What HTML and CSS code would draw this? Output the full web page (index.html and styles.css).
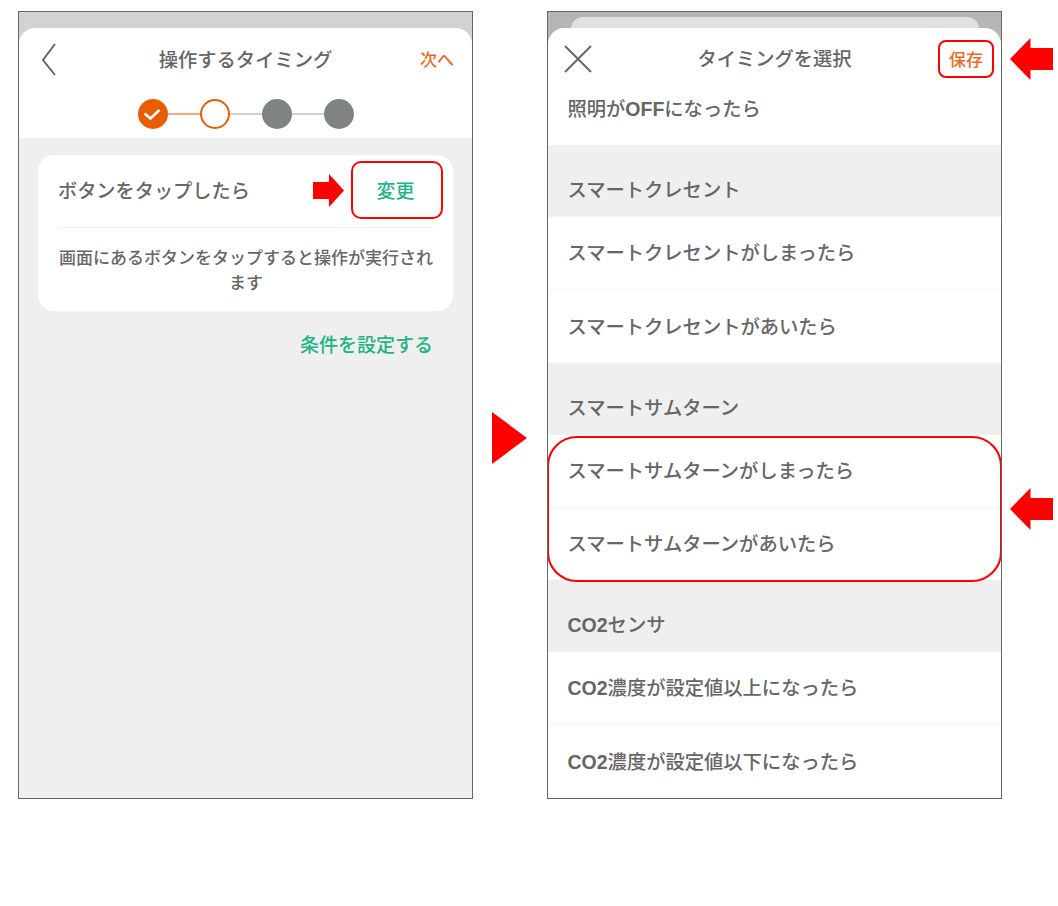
FILE: index.html
```html
<!DOCTYPE html>
<html lang="ja">
<head>
<meta charset="utf-8">
<title>タイミング設定</title>
<link rel="stylesheet" href="styles.css">
</head>
<body>
<main class="canvas">
  <section class="phone phone-light">
    <div class="sheet">
      <header class="nav">
        <svg class="nav-icon" width="30" height="36" viewBox="0 0 30 36"><path d="M15 2 L3 18 L15 33" fill="none" stroke="#666" stroke-width="2"/></svg>
        <h1 class="nav-title">操作するタイミング</h1>
        <span class="nav-action nav-next">次へ</span>
      </header>
      <div class="stepper">
        <span class="step step-done"><svg width="20" height="16" viewBox="0 0 20 16"><path d="M1.500 7.500 L7.500 12.500 L16.500 4" fill="none" stroke="#fff" stroke-width="2.600"/></svg></span>
        <span class="link link-on"></span>
        <span class="step step-now"></span>
        <span class="link"></span>
        <span class="step step-todo"></span>
        <span class="link"></span>
        <span class="step step-todo"></span>
      </div>
      <div class="body">
        <div class="card">
          <div class="card-head">
            <span class="card-title">ボタンをタップしたら</span>
            <svg class="mark-right" width="31" height="33" viewBox="0 0 31 33"><path d="M0 8 H16 V0 L31 16.500 L16 33 V25 H0 Z" fill="#f00"/></svg>
            <span class="change">変更</span>
          </div>
          <p class="card-text">画面にあるボタンをタップすると操作が実行されます</p>
        </div>
        <p class="cond">条件を設定する</p>
      </div>
    </div>
  </section>

  <section class="phone phone-dark">
    <div class="under"></div>
    <div class="sheet sheet-over">
      <header class="nav nav-select">
        <svg class="nav-icon" width="30" height="30" viewBox="0 0 30 30"><path d="M2 2 L28 28 M28 2 L2 28" fill="none" stroke="#666" stroke-width="2"/></svg>
        <h1 class="nav-title">タイミングを選択</h1>
        <span class="nav-action save">保存</span>
      </header>
      <div class="row row-first"><span>照明が<b class="latin">OFF</b>になったら</span></div>
      <div class="group">スマートクレセント</div>
      <div class="row row-line">スマートクレセントがしまったら</div>
      <div class="row">スマートクレセントがあいたら</div>
      <div class="group">スマートサムターン</div>
      <div class="pick">
        <div class="row row-line">スマートサムターンがしまったら</div>
        <div class="row row-short">スマートサムターンがあいたら</div>
      </div>
      <div class="group"><span><b class="latin">CO2</b>センサ</span></div>
      <div class="row row-line"><span><b class="latin">CO2</b>濃度が設定値以上になったら</span></div>
      <div class="row"><span><b class="latin">CO2</b>濃度が設定値以下になったら</span></div>
    </div>
  </section>

  <svg class="mark mark-next" width="35" height="52" viewBox="0 0 35 52"><path d="M0 0 L35 26 L0 52 Z" fill="#f00"/></svg>
  <svg class="mark mark-save" width="43" height="42" viewBox="0 0 43 42"><path d="M0 21 L20.500 0 V10 H43 V32 H20.500 V42 Z" fill="#f00"/></svg>
  <svg class="mark mark-pick" width="43" height="42" viewBox="0 0 43 42"><path d="M0 21 L20.500 0 V10 H43 V32 H20.500 V42 Z" fill="#f00"/></svg>
</main>
</body>
</html>
```
FILE: styles.css
```css
* { box-sizing: border-box; }
html, body { margin: 0; background: #fff; }
body { font-family: "Noto Sans CJK JP", "Noto Sans", sans-serif; color: #666; font-weight: 500; }
.canvas { position: relative; width: 1058px; height: 906px; display: flex; gap: 74px; padding: 11px 0 0 18px; overflow: hidden; }
.phone { position: relative; width: 455px; height: 788px; border: 1px solid #666; overflow: hidden; padding-top: 16px; }
.phone-light { background: #d2d2d2; }
.phone-dark { background: #b5b5b5; overflow: visible; }
.under { position: absolute; left: 23px; right: 22px; top: 5px; height: 30px; background: #e0e0e0; border-radius: 12px 12px 0 0; }
.sheet { position: relative; height: 100%; background: #fff; border-radius: 16px 16px 0 0; display: flex; flex-direction: column; overflow: hidden; }
.nav { position: relative; height: 62px; display: flex; align-items: center; justify-content: center; flex: none; }
.nav-icon { position: absolute; left: 21px; top: 14px; }
.nav-select { height: 60px; }
.nav-select .nav-icon { left: 15px; top: 16px; }
.nav-title { margin: 0; font-size: 19.3px; font-weight: 500; line-height: 28px; }
.nav-action { position: absolute; font-size: 17px; line-height: 24px; color: #ec6a1f; }
.nav-next { right: 18px; top: 19px; }
.save { right: 7px; top: 12px; width: 56px; height: 38px; border: 2px solid #f00; border-radius: 8px; display: flex; align-items: center; justify-content: center; }
.stepper { height: 48px; display: flex; align-items: flex-start; justify-content: center; flex: none; padding-left: 1px; }
.step { width: 30px; height: 30px; border-radius: 50%; flex: none; display: flex; align-items: center; justify-content: center; margin-top: 9px; }
.step-done { background: #e85d04; }
.step-now { background: #fff; border: 2.5px solid #e85d04; }
.step-todo { background: #808383; }
.link { width: 33px; height: 2px; margin-top: 23px; background: #d0d0d0; flex: none; margin-left: -0.5px; margin-right: -0.5px; }
.link-on { background: #f5a67f; }
.body { flex: 1; background: #efefef; padding: 17px 19px 0; }
.card { background: #fff; border-radius: 16px; padding: 7px 10px 0 20px; height: 156px; }
.card-head { height: 66px; display: flex; align-items: center; border-bottom: 1px solid #f1f1f1; margin-right: 8px; padding-bottom: 9px; }
.card-title { font-size: 19.2px; line-height: 28px; flex: 1; }
.mark-right { flex: none; margin-right: 7px; }
.change { width: 92px; height: 58px; border: 2px solid #f00; border-radius: 10px; color: #20b583; font-size: 19px; display: flex; align-items: center; justify-content: center; padding: 0 3px 2px 0; margin-right: -8px; flex: none; }
.card-text { margin: 16px 8px 0 -1px; font-size: 17px; line-height: 25px; text-align: center; }
.cond { margin: 19px 20px 0 0; font-size: 19px; line-height: 28px; text-align: right; color: #20b583; }
.row { height: 73px; flex: none; display: flex; align-items: center; padding: 0 0 2px 19.5px; font-size: 19.3px; background: #fff; }
.row-line { border-bottom: 1px solid #f5f5f5; }
.row-first { height: 57px; padding-bottom: 17px; }
.row-short { height: 72px; }
.group { height: 72px; flex: none; display: flex; align-items: center; padding: 15px 0 0 19.5px; font-size: 19.3px; background: #efefef; }
.latin { font-family: "Liberation Sans", sans-serif; font-weight: 700; font-size: 19.5px; }
.pick { position: relative; flex: none; }
.pick::after { content: ""; position: absolute; left: -1px; right: -1px; top: 1px; bottom: -2px; border: 2px solid #f00; border-radius: 30px; }
.mark { position: absolute; }
.mark-next { left: 492px; top: 412px; }
.mark-save { left: 1010px; top: 38px; }
.mark-pick { left: 1010px; top: 488px; }
```
